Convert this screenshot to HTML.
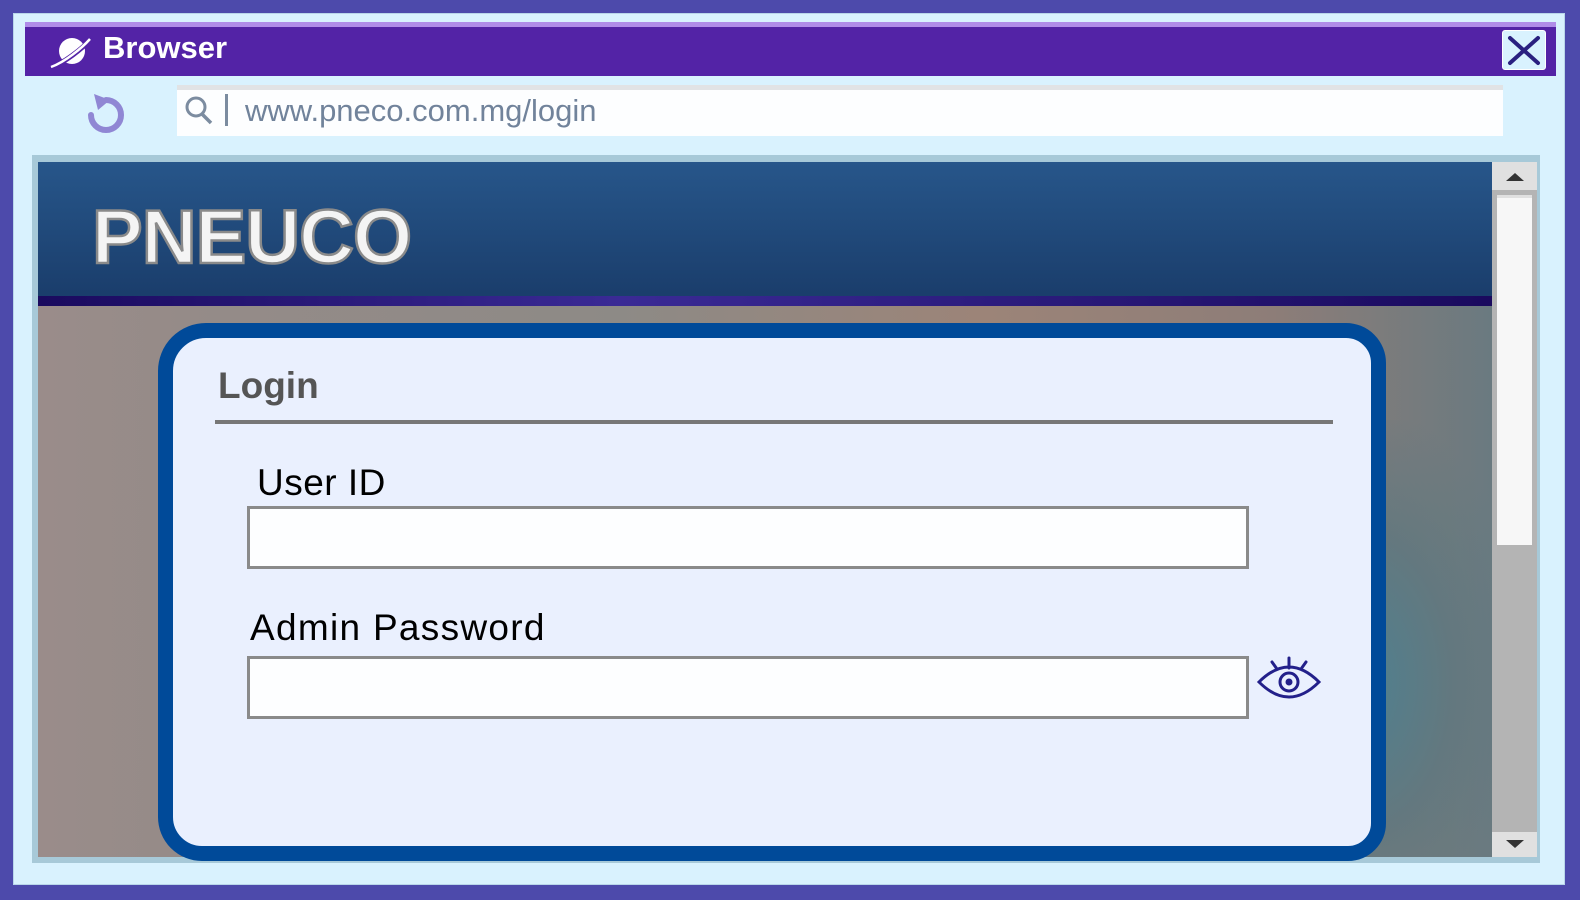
<!DOCTYPE html>
<html><head><meta charset="utf-8"><style>
*{margin:0;padding:0;box-sizing:border-box}
body{width:1580px;height:900px;overflow:hidden;background:#4d4aab;font-family:"Liberation Sans",sans-serif;position:relative}
.abs{position:absolute}
</style></head><body>
<div class="abs" style="left:13px;top:13px;width:1552px;height:872px;background:#d9f2fe;border:1px solid #b9d6ea"></div>
<div class="abs" style="left:25px;top:22px;width:1531px;height:5px;background:#b08ce8"></div>
<div class="abs" style="left:25px;top:27px;width:1531px;height:49px;background:#5323a6"></div>
<svg class="abs" style="left:48px;top:34px" width="46" height="36" viewBox="0 0 46 36"><circle cx="24" cy="17" r="13" fill="#fff"/><path d="M2 34 C16 29 34 15 44 4" stroke="#5323a6" stroke-width="5" fill="none"/><path d="M3 33 C17 28 34 14 42 5" stroke="#fff" stroke-width="2.5" fill="none"/></svg>
<div class="abs" style="left:103px;top:30px;color:#fff;font-weight:bold;font-size:31px">Browser</div>
<div class="abs" style="left:1502px;top:30px;width:44px;height:40px;background:#d9f2fe;border:1px solid #fff;border-radius:3px"></div>
<svg class="abs" style="left:1502px;top:30px" width="44" height="40"><path d="M8 8 L36 33 M36 8 L8 33" stroke="#2a2080" stroke-width="4" stroke-linecap="round"/></svg>
<svg class="abs" style="left:82px;top:86px" width="50" height="50" viewBox="0 0 50 50"><path d="M24 14 A15 15 0 1 1 9 29" stroke="#9087d4" stroke-width="6" fill="none" stroke-linecap="round"/><path d="M12 8 L28 14 L16 24 Z" fill="#9087d4"/></svg>
<div class="abs" style="left:177px;top:85px;width:1326px;height:51px;background:#fdfeff;border-top:5px solid #e1e3e5"></div>
<svg class="abs" style="left:180px;top:92px" width="40" height="36"><circle cx="16" cy="15" r="9" stroke="#7c8ca0" stroke-width="3" fill="none"/><path d="M22 22 L31 31" stroke="#7c8ca0" stroke-width="3.5"/></svg>
<div class="abs" style="left:225px;top:94px;width:3px;height:32px;background:#7c8ca0"></div>
<div class="abs" style="left:245px;top:93px;color:#71839b;font-size:31px">www.pneco.com.mg/login</div>
<div class="abs" style="left:32px;top:155px;width:1508px;height:708px;background:#a7c9d8"></div>
<div class="abs" style="left:38px;top:162px;width:1454px;height:695px;background:linear-gradient(90deg,#9a8c8a 0%,#958b88 10%,#8d8a86 40%,#9c8478 65%,#8d7d78 85%,#6a7a80 100%)"></div>
<div class="abs" style="left:1200px;top:420px;width:292px;height:437px;background:radial-gradient(ellipse at 55% 60%,rgba(78,128,144,1) 0%,rgba(97,120,127,.9) 40%,rgba(100,100,100,0) 75%)"></div>
<div class="abs" style="left:38px;top:162px;width:1454px;height:136px;background:linear-gradient(#27568a,#1a3d6b)"></div>
<div class="abs" style="left:38px;top:296px;width:1454px;height:10px;background:linear-gradient(90deg,#1a0a5e,#3a2a95 40%,#1a0a5e)"></div>
<div class="abs" style="left:92px;top:194px;color:#f4f4f4;font-weight:bold;font-size:76px;-webkit-text-stroke:2.5px #8a8a8a;letter-spacing:-1px">PNEUCO</div>
<div class="abs" style="left:1492px;top:162px;width:45px;height:695px;background:#b4b4b4"></div>
<div class="abs" style="left:1492px;top:162px;width:45px;height:28px;background:#e0e0e0"></div>
<svg class="abs" style="left:1492px;top:162px" width="45" height="28"><path d="M14 19 L23 11 L32 19Z" fill="#333"/></svg>
<div class="abs" style="left:1497px;top:195px;width:35px;height:350px;background:#f7f7f7;border-top:3px solid #e0e0e0"></div>
<div class="abs" style="left:1492px;top:832px;width:45px;height:25px;background:#e0e0e0"></div>
<svg class="abs" style="left:1492px;top:832px" width="45" height="25"><path d="M14 8 L23 16 L32 8Z" fill="#333"/></svg>
<div class="abs" style="left:158px;top:323px;width:1228px;height:538px;background:#eaf0fe;border:15px solid #004a99;border-radius:48px 40px 38px 44px"></div>
<div class="abs" style="left:218px;top:365px;color:#555;font-weight:bold;font-size:37px">Login</div>
<div class="abs" style="left:215px;top:420px;width:1118px;height:4px;background:#777"></div>
<div class="abs" style="left:257px;top:462px;color:#000;font-size:37px;letter-spacing:.5px">User ID</div>
<div class="abs" style="left:247px;top:506px;width:1002px;height:63px;background:#fdfeff;border:3px solid #8a8a8a"></div>
<div class="abs" style="left:250px;top:607px;color:#000;font-size:37px;letter-spacing:1.3px">Admin Password</div>
<div class="abs" style="left:247px;top:656px;width:1002px;height:63px;background:#fdfeff;border:3px solid #8a8a8a"></div>
<svg class="abs" style="left:1256px;top:656px" width="66" height="46" viewBox="0 0 66 46"><path d="M3 26 Q33 -4 63 26 Q33 56 3 26Z" stroke="#23208a" stroke-width="3" fill="none"/><circle cx="33" cy="26" r="9" stroke="#23208a" stroke-width="3" fill="none"/><circle cx="33" cy="26" r="3.5" fill="#23208a"/><path d="M33 2 V12 M16 6 L21 13 M50 6 L45 13" stroke="#23208a" stroke-width="3" stroke-linecap="round"/></svg>
</body></html>
